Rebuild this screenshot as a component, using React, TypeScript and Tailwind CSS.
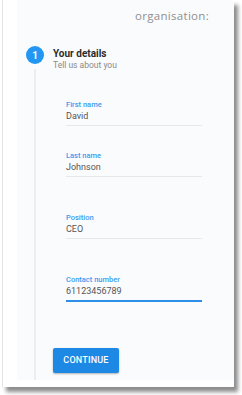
import React from "react";

function Field({ label, value, active, className }: { label: string; value: string; active?: boolean; className?: string }) {
  return (
    <div className={"w-[136px] " + (className ?? "")}>
      <div className="text-[7.5px] leading-[10px] text-[#3d9bef] font-medium">{label}</div>
      <div
        className={
          "text-[9px] leading-[12px] text-[#555] pb-[3px] " +
          (active ? "border-b-2 border-[#2e8fe8]" : "border-b border-[#e6e8ec]")
        }
      >
        {value}
      </div>
    </div>
  );
}

export default function App() {
  return (
    <div className="w-[242px] h-[395px] bg-white" style={{ fontFamily: "Roboto, 'Liberation Sans', sans-serif" }}>
      <div className="ml-[2px] w-[232px] h-[387px] bg-white border-l border-[#e4e4e4] shadow-[4px_5px_4px_rgba(0,0,0,0.45)] flex">
        <div className="w-[14px] shrink-0" />
        <div className="flex-1 h-[380px] bg-[#fafbfd] flex flex-col">
          <div
            className="pt-[9px] pr-[25px] text-right text-[11.5px] leading-[14px] text-[#8f8f8f] tracking-[0.3px]"
            style={{ fontFamily: "'Open Sans', sans-serif" }}
          >
            organisation:
          </div>
          <div className="mt-[23px] flex flex-1 pl-[9px]">
            <div className="w-[18px] flex flex-col items-center shrink-0">
              <div className="w-[18px] h-[18px] rounded-full bg-[#2196f3] text-white text-[10px] font-bold flex items-center justify-center">
                1
              </div>
              <div className="mt-[5px] w-[2px] flex-1 bg-[#eceef2]" />
            </div>
            <div className="ml-[9px] flex flex-col">
              <div className="mt-[2px] text-[10px] leading-[12px] font-bold text-[#2b2b2b]">Your details</div>
              <div className="text-[8.5px] leading-[11px] text-[#8a8a8a]">Tell us about you</div>
              <div className="ml-[13px] flex flex-col">
                <Field className="mt-[29px]" label="First name" value="David" />
                <Field className="mt-[25px]" label="Last name" value="Johnson" />
                <Field className="mt-[36px]" label="Position" value="CEO" />
                <Field className="mt-[36px]" label="Contact number" value="61123456789" active />
              </div>
              <button className="mt-[46px] w-[66px] h-[25px] rounded-[2px] bg-[#1e88e5] text-white text-[9px] font-medium tracking-[0.2px] shadow-[0_1px_2px_rgba(0,0,0,0.3)]">
                CONTINUE
              </button>
            </div>
          </div>
        </div>
      </div>
    </div>
  );
}
